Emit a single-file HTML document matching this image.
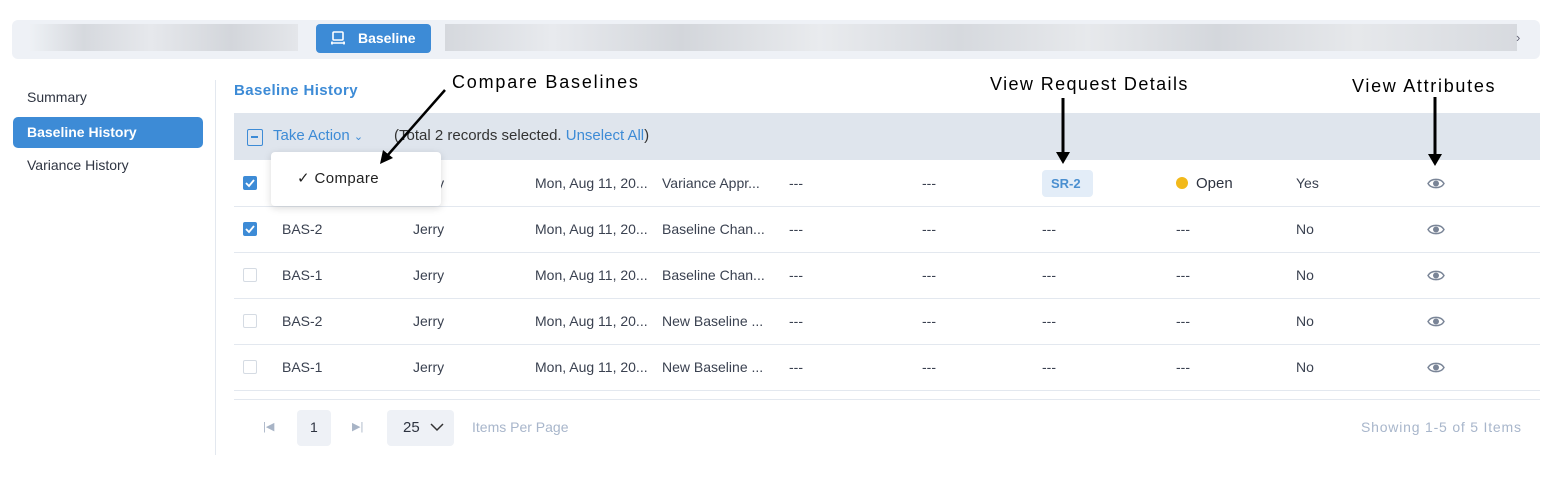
<!DOCTYPE html><html><head><style>
*{box-sizing:border-box;margin:0;padding:0}
body{width:1550px;height:495px;background:#fff;font-family:"Liberation Sans",sans-serif;position:relative;overflow:hidden;color:#2d3340}
.a{position:absolute;white-space:nowrap}
.t{font-size:14px;color:#3a4150}
.cb{position:absolute;width:14px;height:14px;border:1px solid #d5dbe3;border-radius:2px;background:#fff}
.cbc{background:#3d8bd6;border-color:#3d8bd6}
.line{position:absolute;left:234px;width:1306px;height:1px;background:#e3e8ef}
</style></head><body>
<div class="a" style="left:12px;top:20px;width:1528px;height:39px;background:#eef1f6;border-radius:6px"></div>
<div class="a" style="left:30px;top:24px;width:268px;height:27px;background:linear-gradient(90deg,#eef1f5,#d6d9de 20%,#e6e8ec 45%,#d3d6db 75%,#e4e6ea)"></div>
<div class="a" style="left:445px;top:24px;width:1072px;height:27px;background:linear-gradient(90deg,#d5d8dd,#e8eaee 10%,#d3d6db 22%,#e9ebee 35%,#d6d9de 48%,#e7e9ec 60%,#d4d7dc 72%,#e6e8eb 85%,#d7dadf)"></div>
<div class="a" style="left:1516px;top:30px;font-size:13px;color:#667">›</div>
<div class="a" style="left:316px;top:24px;width:115px;height:29px;background:#3d8bd6;border-radius:4px;color:#fff;font-size:14px;font-weight:bold;padding:6px 0 0 42px">Baseline
<svg style="position:absolute;left:14px;top:7px" width="16" height="15" viewBox="0 0 16 15" fill="none" stroke="#fff" stroke-width="1.6"><rect x="3" y="1" width="10" height="8" rx="1"/><path d="M1 12h14M2 10.5v3M14 10.5v3"/></svg></div>
<div class="a" style="left:27px;top:89px;font-size:14px;color:#2f3542">Summary</div>
<div class="a" style="left:13px;top:117px;width:190px;height:31px;background:#3d8bd6;border-radius:5px;color:#fff;font-size:14px;font-weight:bold;padding:7px 0 0 14px">Baseline History</div>
<div class="a" style="left:27px;top:157px;font-size:14px;color:#2f3542">Variance History</div>
<div class="a" style="left:215px;top:80px;width:1px;height:375px;background:#e3e8ef"></div>
<div class="a" style="left:234px;top:82px;font-size:15px;font-weight:bold;color:#3d8bd6;letter-spacing:0.4px">Baseline History</div>
<div class="a" style="left:452px;top:72px;font-size:18px;color:#000;letter-spacing:1.8px">Compare Baselines</div>
<div class="a" style="left:990px;top:74px;font-size:18px;color:#000;letter-spacing:1.4px">View Request Details</div>
<div class="a" style="left:1352px;top:76px;font-size:18px;color:#000;letter-spacing:1.7px">View Attributes</div>
<div class="a" style="left:234px;top:113px;width:1306px;height:47px;background:#dfe5ed"></div>
<div class="a" style="left:247px;top:129px;width:16px;height:17px;border:1.5px solid #3d8bd6;border-radius:2px"><div style="position:absolute;left:3px;top:6px;width:7px;height:1.5px;background:#3d8bd6"></div></div>
<div class="a" style="left:273px;top:127px;font-size:15px;color:#3d8bd6">Take Action <span style="font-size:11px">&#8964;</span></div>
<div class="a" style="left:394px;top:127px;font-size:15px;color:#333">(Total 2 records selected. <span style="color:#3d8bd6">Unselect All</span>)</div>
<div class="line" style="top:206px"></div><div class="line" style="top:252px"></div><div class="line" style="top:298px"></div><div class="line" style="top:344px"></div><div class="line" style="top:390px"></div><div class="line" style="top:399px"></div>
<div class="cb cbc" style="left:243px;top:176px"></div><div class="cb cbc" style="left:243px;top:222px"></div>
<div class="cb" style="left:243px;top:268px"></div><div class="cb" style="left:243px;top:314px"></div><div class="cb" style="left:243px;top:360px"></div>
<svg class="a" style="left:243px;top:176px" width="14" height="60"><path d="M3 7l3 3 5-6M3 53l3 3 5-6" stroke="#fff" stroke-width="1.8" fill="none"/></svg>
<div class="a t" style="left:413px;top:175px">Jerry</div>
<div class="a t" style="left:535px;top:175px">Mon, Aug 11, 20...</div><div class="a t" style="left:662px;top:175px">Variance Appr...</div>
<div class="a t" style="left:789px;top:175px">---</div><div class="a t" style="left:922px;top:175px">---</div>
<div class="a" style="left:1042px;top:170px;width:51px;height:27px;background:#e3edf8;border-radius:4px;color:#4a8fd0;font-size:13px;font-weight:bold;padding:6px 0 0 9px">SR-2</div>
<div class="a" style="left:1176px;top:177px;width:12px;height:12px;border-radius:6px;background:#f2b91a"></div>
<div class="a" style="left:1196px;top:175px;font-size:15px;color:#2d3340">Open</div>
<div class="a t" style="left:1296px;top:175px">Yes</div>
<div class="a t" style="left:282px;top:221px">BAS-2</div><div class="a t" style="left:413px;top:221px">Jerry</div><div class="a t" style="left:535px;top:221px">Mon, Aug 11, 20...</div><div class="a t" style="left:662px;top:221px">Baseline Chan...</div><div class="a t" style="left:789px;top:221px">---</div><div class="a t" style="left:922px;top:221px">---</div><div class="a t" style="left:1042px;top:221px">---</div><div class="a t" style="left:1176px;top:221px">---</div><div class="a t" style="left:1296px;top:221px">No</div>
<div class="a t" style="left:282px;top:267px">BAS-1</div><div class="a t" style="left:413px;top:267px">Jerry</div><div class="a t" style="left:535px;top:267px">Mon, Aug 11, 20...</div><div class="a t" style="left:662px;top:267px">Baseline Chan...</div><div class="a t" style="left:789px;top:267px">---</div><div class="a t" style="left:922px;top:267px">---</div><div class="a t" style="left:1042px;top:267px">---</div><div class="a t" style="left:1176px;top:267px">---</div><div class="a t" style="left:1296px;top:267px">No</div>
<div class="a t" style="left:282px;top:313px">BAS-2</div><div class="a t" style="left:413px;top:313px">Jerry</div><div class="a t" style="left:535px;top:313px">Mon, Aug 11, 20...</div><div class="a t" style="left:662px;top:313px">New Baseline ...</div><div class="a t" style="left:789px;top:313px">---</div><div class="a t" style="left:922px;top:313px">---</div><div class="a t" style="left:1042px;top:313px">---</div><div class="a t" style="left:1176px;top:313px">---</div><div class="a t" style="left:1296px;top:313px">No</div>
<div class="a t" style="left:282px;top:359px">BAS-1</div><div class="a t" style="left:413px;top:359px">Jerry</div><div class="a t" style="left:535px;top:359px">Mon, Aug 11, 20...</div><div class="a t" style="left:662px;top:359px">New Baseline ...</div><div class="a t" style="left:789px;top:359px">---</div><div class="a t" style="left:922px;top:359px">---</div><div class="a t" style="left:1042px;top:359px">---</div><div class="a t" style="left:1176px;top:359px">---</div><div class="a t" style="left:1296px;top:359px">No</div>
<svg class="a" style="left:1427px;top:175px" width="18" height="200" fill="none" stroke="#7a8597" stroke-width="1.4">
<g id="e"><path d="M1 8.5C4 3 14 3 17 8.5C14 14 4 14 1 8.5Z"/><circle cx="9" cy="8.5" r="2.3" fill="#7a8597"/></g>
<use href="#e" y="46"/><use href="#e" y="92"/><use href="#e" y="138"/><use href="#e" y="184"/></svg>
<div class="a" style="left:271px;top:152px;width:170px;height:54px;background:#fff;border-radius:4px;box-shadow:0 2px 8px rgba(0,0,0,.15)"></div>
<div class="a" style="left:297px;top:169px;font-size:15px;color:#222;letter-spacing:0.4px">✓ Compare</div>
<svg class="a" style="left:0;top:0" width="1550" height="200">
<path d="M445 90L387 156" stroke="#000" stroke-width="2.5"/><path d="M380 164l3-14 10 8z" fill="#000"/>
<path d="M1063 98V154" stroke="#000" stroke-width="3"/><path d="M1056 152h14l-7 12z" fill="#000"/>
<path d="M1435 97V156" stroke="#000" stroke-width="3"/><path d="M1428 154h14l-7 12z" fill="#000"/>
</svg>
<div class="a" style="left:263px;top:420px;font-size:11px;color:#a8b4c6">|◀</div>
<div class="a" style="left:297px;top:410px;width:34px;height:36px;background:#eef1f6;border-radius:4px;font-size:14px;padding:9px 0 0 13px">1</div>
<div class="a" style="left:352px;top:420px;font-size:11px;color:#a8b4c6">▶|</div>
<div class="a" style="left:387px;top:410px;width:67px;height:36px;background:#eef1f6;border-radius:4px;font-size:15px;padding:9px 0 0 16px">25 <svg style="position:absolute;left:43px;top:13px" width="14" height="9"><path d="M1 1l6 6 6-6" stroke="#333" stroke-width="1.5" fill="none"/></svg></div>
<div class="a" style="left:472px;top:419px;font-size:14px;color:#a8b6cb">Items Per Page</div>
<div class="a" style="left:1361px;top:419px;font-size:14px;color:#a8b6cb;letter-spacing:0.8px">Showing 1-5 of 5 Items</div>
</body></html>
